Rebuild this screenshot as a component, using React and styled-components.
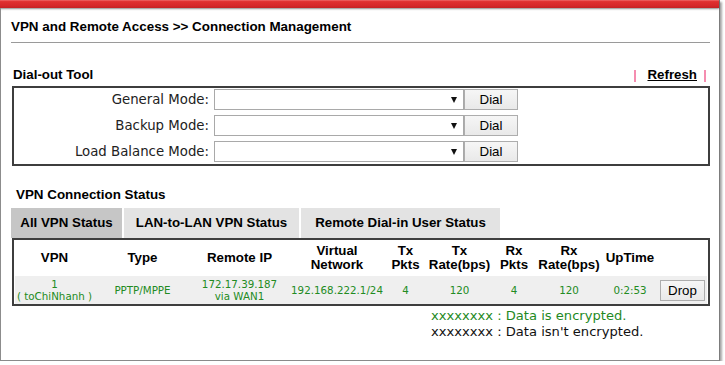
import styled, { createGlobalStyle } from 'styled-components'

const GlobalStyle = createGlobalStyle`
  html, body {
    margin: 0;
    padding: 0;
    background: #fff;
  }
  body {
    font-family: "Liberation Sans", Arial, sans-serif;
    color: #000;
  }
`

const Frame = styled.div`
  width: 720px;
  height: 361px;
  box-sizing: border-box;
  display: flex;
  flex-direction: column;
  border-right: 1px solid #7c7c7c;
  border-bottom: 1px solid #8a8a8a;
  box-shadow: 2px 2px 2px rgba(0, 0, 0, 0.35);
`

const TopBar = styled.div`
  height: 8px;
  flex: none;
  background: linear-gradient(#ee6a6a 0, #e03030 20%, #d6282a 70%, #c42224 100%);
  box-shadow: 0 1px 2px rgba(0, 0, 0, 0.45);
`

const Body = styled.div`
  flex: 1;
  border-left: 1px solid #8c8c8c;
  padding: 0 9px 0 11px;
`

const Title = styled.h1`
  margin: 11px 0 0 -1px;
  padding-bottom: 7px;
  border-bottom: 1px solid #9a9a9a;
  font-size: 13.4px;
  line-height: 16px;
  font-weight: bold;
`

const HeadRow = styled.div`
  display: flex;
  justify-content: space-between;
  align-items: center;
  margin-top: 24px;
  padding: 0 4px 0 1px;
  font-size: 13.3px;
  line-height: 16px;
  font-weight: bold;
`

const Refresh = styled.div`
  display: flex;
  align-items: center;
`

const Bar = styled.span`
  display: inline-block;
  width: 2px;
  height: 12px;
  margin-top: 1px;
  background: #f58db0;
  margin: ${(p) => (p.$left ? '1px 11px 0 0' : '1px 0 0 7px')};
`

const Link = styled.a`
  color: #000;
  text-decoration: underline;
  cursor: pointer;
`

const DialBox = styled.div`
  margin-top: 3px;
  border: 2px solid #3e3e3e;
  padding: 1px 0 2px;
  display: grid;
  row-gap: 5px;
`

const DialRow = styled.div`
  display: grid;
  grid-template-columns: 200px 250px 54px;
  height: 21px;
  align-items: center;
`

const Label = styled.label`
  text-align: right;
  padding-right: 5px;
  font-family: "DejaVu Sans", Verdana, sans-serif;
  font-size: 13.3px;
  color: #222;
`

const Select = styled.div`
  height: 21px;
  box-sizing: border-box;
  border: 1px solid #a9a9a9;
  background: #fff;
  display: flex;
  align-items: center;
  justify-content: flex-end;
  padding-right: 6px;
`

const Arrow = styled.span`
  width: 0;
  height: 0;
  border-left: 3px solid transparent;
  border-right: 3px solid transparent;
  border-top: 6px solid #111;
`

const Button = styled.button`
  height: ${(p) => p.$h || 21}px;
  width: ${(p) => p.$w || 54}px;
  box-sizing: border-box;
  border: 1px solid #adadad;
  background: linear-gradient(#f6f6f6, #e9e9e9);
  font-family: "Liberation Sans", Arial, sans-serif;
  font-size: 13.3px;
  color: #000;
  padding: 0;
  border-radius: 0;
`

const SectionTitle = styled.div`
  margin-top: 21px;
  padding-left: 4px;
  font-size: 13.4px;
  line-height: 16px;
  font-weight: bold;
`

const Tabs = styled.div`
  display: flex;
  gap: 2px;
  margin: 5px 0 0 -1px;
`

const Tab = styled.div`
  width: ${(p) => p.$w}px;
  height: 30px;
  line-height: 30px;
  text-align: center;
  font-size: 13.3px;
  font-weight: bold;
  background: ${(p) => (p.$active ? '#c6c6c6' : '#e3e3e3')};
`

const TableBox = styled.div`
  border: 2px solid #3e3e3e;
  padding: 1px 1px 0;
  display: grid;
  row-gap: 1px;
`

const cols = '79px 97px 97px 98px 39px 69px 40px 70px 52px 1fr'

const HeaderRow = styled.div`
  display: grid;
  grid-template-columns: ${cols};
  height: 34px;
  font-size: 13.3px;
  font-weight: bold;
  line-height: 14px;
`

const DataRow = styled.div`
  display: grid;
  grid-template-columns: ${cols};
  height: 28px;
  background: #efefef;
  font-family: "DejaVu Sans", Verdana, sans-serif;
  font-size: 10.3px;
  line-height: 12px;
  color: #228b22;
`

const Cell = styled.div`
  display: flex;
  align-items: center;
  justify-content: ${(p) => (p.$end ? 'flex-end' : 'center')};
  padding-right: ${(p) => (p.$end ? '2px' : '0')};
  text-align: center;
  white-space: nowrap;
  min-width: 0;
`

const Legend = styled.div`
  margin: 2px 0 0 419px;
  font-family: "DejaVu Sans", Verdana, sans-serif;
  font-size: 13.1px;
  line-height: 16px;
`

const LegendLine = styled.div`
  color: ${(p) => (p.$green ? '#1f8a1f' : '#111')};
`

const modes = ['General Mode:', 'Backup Mode:', 'Load Balance Mode:']

const headers = [
  ['VPN'],
  ['Type'],
  ['Remote IP'],
  ['Virtual', 'Network'],
  ['Tx', 'Pkts'],
  ['Tx', 'Rate(bps)'],
  ['Rx', 'Pkts'],
  ['Rx', 'Rate(bps)'],
  ['UpTime'],
]

const row = [
  ['1', '( toChiNhanh )'],
  ['PPTP/MPPE'],
  ['172.17.39.187', 'via WAN1'],
  ['192.168.222.1/24'],
  ['4'],
  ['120'],
  ['4'],
  ['120'],
  ['0:2:53'],
]

const lines = (parts) =>
  parts.map((t, i) => (
    <span key={i}>
      {i > 0 && <br />}
      {t}
    </span>
  ))

export default function App() {
  return (
    <>
      <GlobalStyle />
      <Frame>
        <TopBar />
        <Body>
          <Title>VPN and Remote Access &gt;&gt; Connection Management</Title>

          <HeadRow>
            <span>Dial-out Tool</span>
            <Refresh>
              <Bar $left />
              <Link>Refresh</Link>
              <Bar />
            </Refresh>
          </HeadRow>

          <DialBox>
            {modes.map((m) => (
              <DialRow key={m}>
                <Label>{m}</Label>
                <Select>
                  <Arrow />
                </Select>
                <Button>Dial</Button>
              </DialRow>
            ))}
          </DialBox>

          <SectionTitle>VPN Connection Status</SectionTitle>
          <Tabs>
            <Tab $w={111} $active>All VPN Status</Tab>
            <Tab $w={175}>LAN-to-LAN VPN Status</Tab>
            <Tab $w={199}>Remote Dial-in User Status</Tab>
          </Tabs>

          <TableBox>
            <HeaderRow>
              {headers.map((h, i) => (
                <Cell key={i}>
                  <div>{lines(h)}</div>
                </Cell>
              ))}
              <Cell />
            </HeaderRow>
            <DataRow>
              {row.map((c, i) => (
                <Cell key={i}>
                  <div>{lines(c)}</div>
                </Cell>
              ))}
              <Cell $end>
                <Button $w={45} $h={21}>Drop</Button>
              </Cell>
            </DataRow>
          </TableBox>

          <Legend>
            <LegendLine $green>xxxxxxxx : Data is encrypted.</LegendLine>
            <LegendLine>xxxxxxxx : Data isn't encrypted.</LegendLine>
          </Legend>
        </Body>
      </Frame>
    </>
  )
}
